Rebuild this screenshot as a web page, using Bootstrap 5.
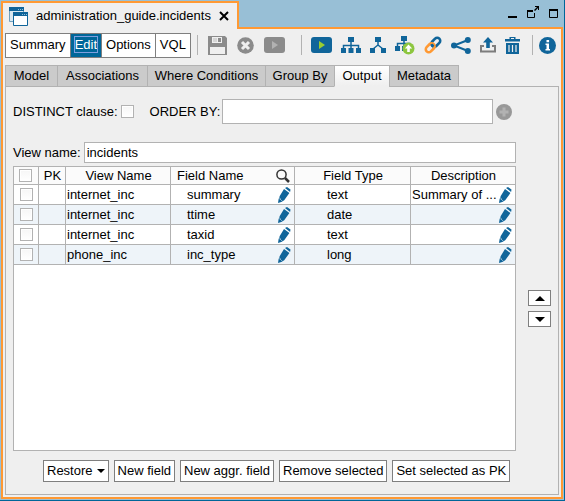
<!DOCTYPE html>
<html lang="en">
<head>
<meta charset="utf-8">
<meta name="viewport" content="width=device-width, initial-scale=1">
<title>administration_guide.incidents</title>
<link href="https://cdn.jsdelivr.net/npm/bootstrap@5.3.0/dist/css/bootstrap.min.css" rel="stylesheet">
<style>
:root { --sky:#98bfd6; --orange:#ff9933; --navy:#006699; --panel:#efefef; --line:#b2b2b2; --dark:#7f7f7f; --ink:#10659a; }
body { font-family:"Liberation Sans", Arial, sans-serif; font-size:13px; line-height:16px; color:#000; background:var(--sky); }
button, input { font:inherit; color:inherit; border-radius:0; }
svg { display:block; flex:none; }
.frame { border-right:1px solid var(--navy); border-bottom:1px solid var(--navy); padding:1px; }
.titlebar { height:26px; }
.doc-tab { width:238px; background:var(--panel); border:2px solid var(--orange); border-bottom:0; padding:0 8px 0 6px; position:relative; z-index:1; margin-bottom:-2px; }
.bare { background:none; border:0; padding:0; }
.win-buttons { padding:5px 5px 0 0; gap:10px; }
.sheet { background:var(--panel); border:2px solid var(--orange); padding:3px 2px 2px 2px; min-height:0; }
.toolbar { height:26px; }
.modes { border:1px solid var(--dark); height:25px; background:#fff; }
.modes .bare { padding:0 4px; border-left:1px solid var(--dark); }
.modes .bare:first-child { border-left:0; }
.modes .chosen { background:var(--navy); color:#fff; }
.modes .chosen span { outline:1px solid #7f9fdf; }
.tools { padding:0 3px 0 6px; }
.gap-a { gap:10px; } .gap-b { gap:9px; } .gap-c { gap:6px; margin-left:12px; }
.divide { width:1px; height:20px; background:var(--line); }
.tabs { margin-top:7px; height:22px; position:relative; z-index:1; margin-bottom:-1px; }
.tabs button { background:#cbcbcb; border:1px solid var(--line); padding:0; margin-right:-1px; height:22px; }
.tabs button.current { background:linear-gradient(#fff,#efefef); border-bottom-color:var(--panel); }
.w-53{width:53px}.w-91{width:91px}.w-119{width:119px}.w-70{width:70px}.w-56{width:56px}
.pane { border:1px solid var(--line); padding:12px 6px 12px 7px; min-height:0; }
.box { border:1px solid var(--line); background:#fff; padding:0 2px; min-width:0; outline-offset:-1px; }
.tick { appearance:none; display:block; width:13px; height:13px; margin:0; border:1px solid var(--line); background:linear-gradient(#f6f6f6,#fff); box-shadow:inset 0 0 0 1px #fff; }
.tick:checked { background:var(--navy); }
.order-row { height:25px; padding-right:40px; }
.order-row .box { height:25px; margin:0 3px 0 2px; }
.order-row .tick { margin-left:3px; }
.name-row { margin-top:18px; padding-right:36px; }
.name-row .box { height:21px; margin-left:3px; }
.grid-area { margin-top:3px; min-height:0; }
.grid-box { border:1px solid var(--line); background:#fff; min-width:0; overflow:auto; }
.fields { width:100%; table-layout:fixed; border-collapse:separate; border-spacing:0; }
.fields th, .fields td { border:1px solid var(--line); border-width:0 1px 1px 0; padding:0 0 0 1px; height:20px; font-weight:400; white-space:nowrap; overflow:hidden; }
.fields th { height:18px; text-align:center; background:#fbfbfb; }
.fields tr > :last-child { border-right:0; }
.fields tbody tr:nth-child(even) { background:#eef4f9; }
.fields .tick { margin-left:5px; }
.fields th .tick { margin-left:4px; }
.c-a{width:25px}.c-b{width:27px}.c-c{width:105px}.c-d{width:124px}.c-e{width:116px}
.in-15 { padding-left:15px; } .in-5 { padding-left:5px; }
.pen-end { padding-right:3px; }
.fields td.in-32 { padding-left:32px; }
.side { width:36px; padding-left:12px; gap:5px; }
.push, .side button { background:#fff; border:1px solid var(--dark); padding:0 3px; height:22px; white-space:nowrap; }
.side button { width:23px; height:16px; padding:0; }
.actions { margin-top:9px; gap:5px; padding-left:30px; }
</style>
<script src="https://cdn.jsdelivr.net/npm/bootstrap@5.3.0/dist/js/bootstrap.bundle.min.js"></script>
</head>
<body>
<svg width="0" height="0" class="position-absolute" aria-hidden="true">
  <symbol id="pen" viewBox="0 0 13 16"><path fill="#10659a" d="M7 1 9 0l3.500 2.500-.4 2.400zM6 2.100l5.400 4L6 13.500l-2 .7.100-1.300-1.400.3.100-1.600-1.600.3.400-2.600zM.7 11.500l4 3.100L0 16z"/></symbol>
</svg>
<div class="frame vh-100 d-flex flex-column">
  <header class="titlebar d-flex justify-content-between flex-shrink-0">
    <div class="doc-tab d-flex align-items-center">
      <svg width="19" height="19" viewBox="0 0 19 19"><path fill="#d9e8f1" stroke="#6f9fbd" d="M.5.5h14v14H.5z"/><path fill="#10659a" d="M0 0h15v4H0z"/><path fill="#fff" stroke="#10659a" d="M4.500 5.500h14v13h-14z"/><path fill="#10659a" d="M4 5h15v4H4z"/><path stroke="#8fc0dc" d="M9 2.500h1m1 0h1m1 0h1M13 7.500h1m1 0h1m1 0h1"/></svg>
      <span class="flex-grow-1 ms-2">administration_guide.incidents</span>
      <button class="bare" aria-label="Close tab"><svg width="10" height="10" viewBox="0 0 10 10"><path stroke="#000" stroke-width="2" d="m1 1 8 8m0-8L1 9"/></svg></button>
    </div>
    <div class="win-buttons d-flex align-items-start">
      <button class="bare" aria-label="Minimize"><svg width="10" height="12" viewBox="0 0 10 12"><path d="M1 10h9v2H1z"/></svg></button>
      <button class="bare" aria-label="Detach"><svg width="12" height="12" viewBox="0 0 12 12"><path fill="none" stroke="#000" d="M.5 5v6.500h7V7"/><path d="M0 4h6v2H0zM8 0h4v4h-1V2L8 5 7 4l3-3H8z"/></svg></button>
      <button class="bare" aria-label="Maximize"><svg width="9" height="12" viewBox="0 0 9 12"><path fill="none" stroke="#000" d="M.5 3.500h8v8h-8z"/><path d="M0 3h9v2H0z"/></svg></button>
    </div>
  </header>
  <main class="sheet flex-grow-1 d-flex flex-column">
    <div class="toolbar d-flex align-items-center flex-shrink-0">
      <div class="modes d-flex align-items-stretch flex-shrink-0">
        <button class="bare">Summary</button><button class="bare chosen"><span>Edit</span></button><button class="bare">Options</button><button class="bare">VQL</button>
      </div>
      <div class="tools flex-grow-1 d-flex align-items-center">
        <div class="d-flex align-items-center gap-a">
          <span class="divide"></span>
          <button class="bare" aria-label="Save"><svg width="19" height="19" viewBox="0 0 19 19"><path fill="#8b8b8b" d="M0 0h17l2 2v17H0z"/><path fill="#efefef" d="M4 1h10v6H4zM2 11h15v7H2z"/><path fill="#8b8b8b" d="M10 2h3v4h-3z"/><path fill="#d5d5d5" d="M5 2h4v4H5z"/></svg></button>
          <button class="bare" aria-label="Cancel"><svg width="17" height="17" viewBox="0 0 17 17"><circle cx="8.500" cy="8.500" r="8.300" fill="#8b8b8b"/><path stroke="#efefef" stroke-width="3" d="m5 5 7 7m0-7-7 7"/></svg></button>
          <button class="bare" aria-label="Run disabled"><svg width="21" height="16" viewBox="0 0 21 16"><rect width="21" height="16" rx="3" fill="#8b8b8b"/><path fill="#b2b2b2" d="m8 4 6 4-6 4z"/></svg></button>
        </div>
        <div class="d-flex align-items-center gap-b ms-auto">
          <span class="divide"></span>
          <button class="bare" aria-label="Run"><svg width="21" height="16" viewBox="0 0 21 16"><rect width="21" height="16" rx="3" fill="#10659a"/><path fill="#9acd32" d="m8 4 6 4-6 4z"/></svg></button>
          <button class="bare" aria-label="Tree view"><svg width="20" height="16" viewBox="0 0 20 16"><path fill="#10659a" d="M7 0h6v5H7zM0 11h5v5H0zM7.500 11h5v5h-5zM15 11h5v5h-5z"/><path fill="none" stroke="#10659a" stroke-width="1.500" d="M10 4v8M2.500 12V8.500h15V12"/></svg></button>
          <button class="bare" aria-label="Lineage"><svg width="16" height="16" viewBox="0 0 16 16"><path fill="#10659a" d="M5 0h6v5H5zM0 11h5v5H0zM11 11h5v5h-5z"/><path fill="none" stroke="#10659a" stroke-width="1.500" d="M8 4v4l-5 4m5-4 5 4"/></svg></button>
          <button class="bare" aria-label="Used by"><svg width="20" height="19" viewBox="0 0 20 19"><path fill="#10659a" d="M6 0h6v5H6zM0 10h5v5H0zM7 10h4v5H7z"/><path fill="none" stroke="#10659a" stroke-width="1.500" d="M9 4v7M2.500 11V7.500h13"/><circle cx="13.500" cy="12.500" r="6" fill="#8dc63f"/><path fill="#fff" d="m13.500 8.500 3.700 4h-2.400v3.500h-2.600v-3.500H9.800z"/></svg></button>
          <button class="bare" aria-label="Associate"><svg width="18" height="18" viewBox="0 0 18 18"><g fill="none" stroke-width="2.600"><rect x="-5" y="-3" width="10" height="6" rx="3" stroke="#10659a" transform="translate(11.800 6.200) rotate(-45)"/><rect x="-5" y="-3" width="10" height="6" rx="3" stroke="#ff9933" transform="translate(6.200 11.800) rotate(-45)"/><path stroke="#10659a" d="m7.800 8 .3 1.300 1.500 1.100"/></g></svg></button>
          <button class="bare" aria-label="Share"><svg width="20" height="17" viewBox="0 0 20 17"><path fill="none" stroke="#10659a" stroke-width="2" d="M17 3 3 8.500 17 14"/><g fill="#10659a"><circle cx="16.800" cy="3" r="3"/><circle cx="3" cy="8.500" r="3"/><circle cx="16.800" cy="14" r="3"/></g></svg></button>
          <button class="bare" aria-label="Deploy"><svg width="16" height="16" viewBox="0 0 16 16"><path fill="#10659a" d="m8 0 5 5.500H9.800V11H6.200V5.500H3z"/><path fill="none" stroke="#7d7d7d" stroke-width="2" d="M4 9H1v5.500h14V9h-3"/></svg></button>
          <button class="bare" aria-label="Delete"><svg width="15" height="17" viewBox="0 0 15 17"><path fill="#10659a" d="M0 2h4.500V0h6v2H15v2.500H0zM1 6h13v11H1z"/><path stroke="#efefef" d="M6 1.500h3"/><path stroke="#efefef" stroke-width="1.200" d="M4 8v7m3.500-7v7M11 8v7"/></svg></button>
        </div>
        <div class="d-flex align-items-center gap-c">
          <span class="divide"></span>
          <button class="bare" aria-label="Information"><svg width="17" height="17" viewBox="0 0 17 17"><circle cx="8.500" cy="8.500" r="8.500" fill="#10659a"/><path fill="#fff" d="M7.500 3h2.600v2.200H7.500zM6.500 6.500H10V12h1v1.500H6.500V12h1V8h-1z"/></svg></button>
        </div>
      </div>
    </div>
    <div class="tabs d-flex flex-shrink-0" role="tablist">
      <button role="tab" class="w-53">Model</button><button role="tab" class="w-91">Associations</button><button role="tab" class="w-119">Where Conditions</button><button role="tab" class="w-70">Group By</button><button role="tab" class="w-56 current" aria-selected="true">Output</button><button role="tab" class="w-70">Metadata</button>
    </div>
    <section class="pane flex-grow-1 d-flex flex-column" role="tabpanel">
      <div class="order-row d-flex align-items-center flex-shrink-0">
        <label for="distinct">DISTINCT clause:</label>
        <input type="checkbox" id="distinct" class="tick">
        <label for="order" class="ms-3">ORDER BY:</label>
        <input type="text" id="order" class="box flex-grow-1">
        <button class="bare" aria-label="Add order"><svg width="16" height="16" viewBox="0 0 16 16"><circle cx="8" cy="8" r="8" fill="#989898"/><path stroke="#b2b2b2" stroke-width="3" d="M8 3.500v9M3.500 8h9"/></svg></button>
      </div>
      <div class="name-row d-flex align-items-center flex-shrink-0">
        <label for="vname">View name:</label>
        <input type="text" id="vname" class="box flex-grow-1" value="incidents">
      </div>
      <div class="grid-area flex-grow-1 d-flex">
        <div class="grid-box flex-grow-1">
          <table class="fields">
            <colgroup><col class="c-a"><col class="c-b"><col class="c-c"><col class="c-d"><col class="c-e"><col></colgroup>
            <thead><tr>
              <th><input type="checkbox" class="tick" aria-label="Select all"></th><th>PK</th><th>View Name</th>
              <th><div class="d-flex align-items-center justify-content-between in-5 pe-1"><span>Field Name</span><svg width="14" height="14" viewBox="0 0 14 14"><circle cx="5.500" cy="5.500" r="4.600" fill="none" stroke="#333" stroke-width="1.500"/><path stroke="#333" stroke-width="2.500" d="m9 9 4 4"/></svg></div></th>
              <th>Field Type</th><th>Description</th>
            </tr></thead>
            <tbody>
              <tr><td><input type="checkbox" class="tick" aria-label="Select summary"></td><td></td><td>internet_inc</td><td><div class="d-flex align-items-center justify-content-between in-15 pen-end"><span>summary</span><svg width="13" height="16"><use href="#pen"/></svg></div></td><td class="in-32">text</td><td><div class="d-flex align-items-center justify-content-between pen-end"><span>Summary of ...</span><svg width="13" height="16"><use href="#pen"/></svg></div></td></tr>
              <tr><td><input type="checkbox" class="tick" aria-label="Select ttime"></td><td></td><td>internet_inc</td><td><div class="d-flex align-items-center justify-content-between in-15 pen-end"><span>ttime</span><svg width="13" height="16"><use href="#pen"/></svg></div></td><td class="in-32">date</td><td><div class="d-flex justify-content-end pen-end"><svg width="13" height="16"><use href="#pen"/></svg></div></td></tr>
              <tr><td><input type="checkbox" class="tick" aria-label="Select taxid"></td><td></td><td>internet_inc</td><td><div class="d-flex align-items-center justify-content-between in-15 pen-end"><span>taxid</span><svg width="13" height="16"><use href="#pen"/></svg></div></td><td class="in-32">text</td><td><div class="d-flex justify-content-end pen-end"><svg width="13" height="16"><use href="#pen"/></svg></div></td></tr>
              <tr><td><input type="checkbox" class="tick" aria-label="Select inc_type"></td><td></td><td>phone_inc</td><td><div class="d-flex align-items-center justify-content-between in-15 pen-end"><span>inc_type</span><svg width="13" height="16"><use href="#pen"/></svg></div></td><td class="in-32">long</td><td><div class="d-flex justify-content-end pen-end"><svg width="13" height="16"><use href="#pen"/></svg></div></td></tr>
            </tbody>
          </table>
        </div>
        <div class="side d-flex flex-column justify-content-center flex-shrink-0">
          <button aria-label="Move up"><svg class="m-auto" width="10" height="5" viewBox="0 0 10 5"><path d="M5 0 10 5H0z"/></svg></button>
          <button aria-label="Move down"><svg class="m-auto" width="10" height="5" viewBox="0 0 10 5"><path d="M0 0h10L5 5z"/></svg></button>
        </div>
      </div>
      <div class="actions d-flex flex-shrink-0">
        <button class="push d-flex align-items-center">Restore<svg class="ms-1" width="8" height="4" viewBox="0 0 8 4"><path d="M0 0h8L4 4z"/></svg></button><button class="push">New field</button><button class="push">New aggr. field</button><button class="push">Remove selected</button><button class="push">Set selected as PK</button>
      </div>
    </section>
  </main>
</div>
</body>
</html>
